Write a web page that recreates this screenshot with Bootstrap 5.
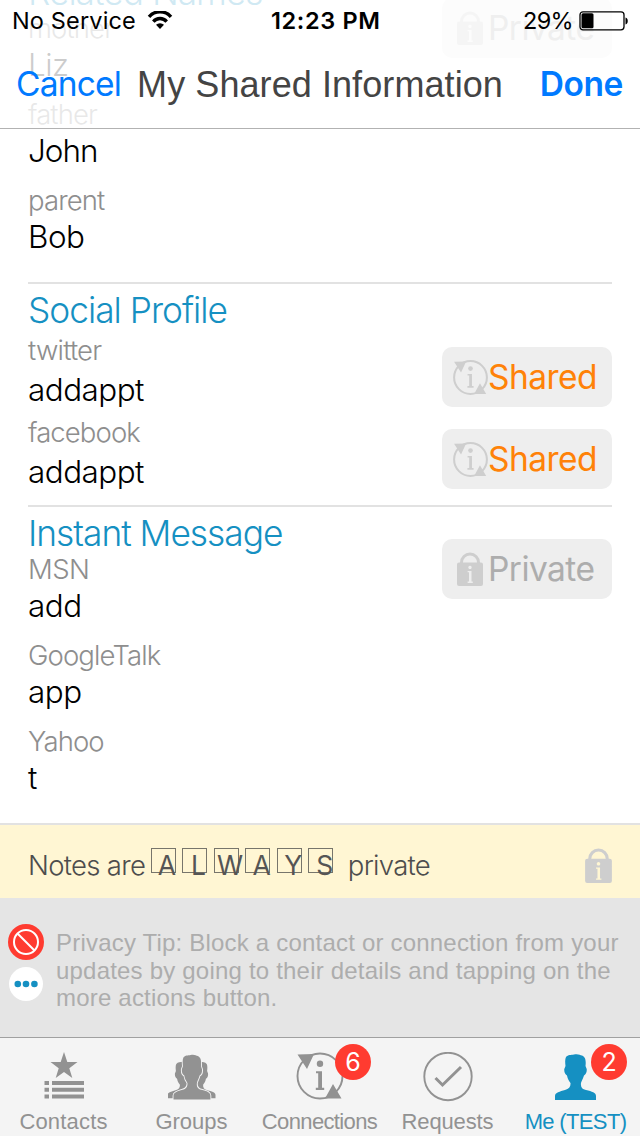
<!DOCTYPE html>
<html lang="en">
<head>
<meta charset="utf-8">
<meta name="viewport" content="width=device-width, initial-scale=1">
<title>My Shared Information</title>
<link href="https://cdn.jsdelivr.net/npm/bootstrap@5.3.0/dist/css/bootstrap.min.css" rel="stylesheet">
<style>
:root{--brand:#1590c2;--ios:#007aff;--muted:#8e8e8e;--rule:#e2e2e2}
body{font-family:Inter,"Liberation Sans",sans-serif;color:#000;background:#fff}
.screen{height:1136px;white-space:nowrap}
.helv{font-family:"Liberation Sans",Arial,sans-serif}

/* translucent header over the scrolled list */
.topbar{height:129px;background:rgba(255,255,255,.8);border-bottom:1px solid #b2b2b2}
.status{height:40px;font-size:23.5px;line-height:41px;padding:0 11px 0 12px}
.status .clock{font-weight:600;letter-spacing:.65px;margin-left:95px}
.battery{width:50px;height:22px}
.titlebar{height:88px;padding:0 17px 0 16px;font-size:33.5px;line-height:88px}
.titlebar a{color:var(--ios);text-decoration:none}
.titlebar h1{font-size:36px;line-height:90px;letter-spacing:.08px;color:#444;font-weight:400}

.list{margin-top:-28px;padding:0 28px;font-weight:300}
.group{border-bottom:2px solid var(--rule)}
.group:last-child{border-bottom:0}
.group h2{font-size:35.3px;line-height:41px;font-weight:300;color:var(--brand);letter-spacing:-1px;margin:0 0 -3px}
.fld dt{font-size:27.5px;line-height:36px;font-weight:300;color:var(--muted);letter-spacing:-.9px}
.fld dd{font-size:31.4px;line-height:38px;letter-spacing:-.5px;margin:0 0 12px}
.fld dl,.fld{margin:0}
.wide dt{margin-bottom:3px}
.wide dd{margin-bottom:-2px}
.pill{width:170px;height:60px;border:0;border-radius:10px;background:#eee;font-size:33.5px;line-height:60px;letter-spacing:-.55px;font-weight:400;padding:0 0 0 11px}
.pill.on{color:#ff8208}
.pill.off{color:#adadad;padding-left:15px}
.pill.top-gap{margin-top:26px}
.ico-gray{color:#cecece}

.notes{height:75px;background:#fff6d3;border-top:2px solid var(--rule);padding:9px 28px 0;font-size:27.5px;font-weight:300;color:#4d4d4d;letter-spacing:-.7px}
.boxed{width:25px;height:25px;border:1.5px solid #77756b;margin-right:6.55px;font-size:26.5px;line-height:32px;font-weight:400;letter-spacing:0;padding-left:8px;color:#555;display:flex;justify-content:center}
.tip{height:139px;background:#e5e5e5;color:#adadad;font-size:24px;line-height:27.6px;letter-spacing:.2px;padding:26px 0 0 8px}

.tabs{height:99px;border-top:1px solid #a0a0a0;background:#f4f4f4;color:#929292;font-size:22px}
.tab-item{width:128px;padding-top:14px}
.tab-item .cap{line-height:26px;margin-top:9px;margin-left:-1px}
.tab-item.current{color:var(--brand)}
.bubble{width:36px;height:36px;border-radius:50%;background:#ff3b30;color:#fff;font:400 25px/36px Inter,sans-serif;top:6px;left:79px}
svg{display:block;flex:none}
</style>
</head>
<body>
<svg width="0" height="0" class="position-absolute" aria-hidden="true">
  <defs>
    <symbol id="lock" viewBox="0 0 26 34">
      <path d="M4.500 12V10.500a8.500 8.500 0 0 1 17 0V12" fill="none" stroke="currentColor" stroke-width="3"/>
      <path fill-rule="evenodd" fill="currentColor" d="M2 10.500H24a2 2 0 0 1 2 2V32a2 2 0 0 1-2 2H2a2 2 0 0 1-2-2V12.500a2 2 0 0 1 2-2ZM13 13.700a1.700 1.700 0 1 0 .01 0ZM10.600 19V20.200H12V29.600H10.600V30.900H15.800V29.600H14.500V19Z"/>
    </symbol>
    <symbol id="share" viewBox="0 0 48 48">
      <circle cx="24" cy="24" r="22.500" fill="none" stroke="currentColor"/>
      <path fill="currentColor" stroke="none" d="M1.500 2.500 18 2 11 17ZM29 46.500H45.500L37 32ZM20 19.200H26V35.800H28.200V38H19.800V35.800H22.200V21.300H20Z"/>
      <circle cx="24" cy="11.800" r="3.200" fill="currentColor" stroke="none"/>
    </symbol>
    <symbol id="person" viewBox="0 0 42 46" overflow="visible">
      <path id="bust" d="M11 3C13 .5 16 1 19 .4C23-.4 25 .8 27 1.500C31 3 31 8 30.500 12L31.700 15C32 18 31 20.500 29 21.500C28 25 26.500 27 26 29C25.500 33 27 35 31 36C37 37.500 41 38.500 41 42V46H0V42C0 38.500 5 37.500 10 36C14 35 15.800 33 15.500 29C14 27 12.500 25 12 21.500C10 20.500 9 18 9.300 15L10.500 12C10 8 10 5 11 3Z"/>
    </symbol>
  </defs>
</svg>

<div class="screen d-flex flex-column overflow-hidden position-relative">

  <header class="topbar position-absolute top-0 start-0 w-100 z-3">
    <div class="status d-flex align-items-start">
      <span style="letter-spacing:.15px">No Service</span>
      <svg class="ms-2" style="margin-top:11px" width="32" height="18" viewBox="0 0 32 18"><g fill="none" stroke="#000" stroke-width="3.300"><path d="M5 5.800a14.500 14.500 0 0 1 22 0"/><path d="M9.300 10.600a8.800 8.800 0 0 1 13.400 0"/></g><path d="M16 18l-4-4.200a5.800 5.800 0 0 1 8 0Z"/></svg>
      <span class="clock">12:23 PM</span>
      <span class="ms-auto" style="letter-spacing:-.7px">29%</span>
      <svg class="battery" style="margin:10px 0 0 6px" viewBox="0 0 50 22"><rect x="1" y="1.800" width="44" height="18" rx="3" fill="none" stroke="#000" stroke-width="1.300"/><rect x="2.500" y="3.300" width="12" height="15" rx="1.500"/><path d="M46.500 7.500c3 .5 3 6.500 0 7Z"/></svg>
    </div>
    <nav class="titlebar d-flex">
      <a href="#" style="letter-spacing:-.8px">Cancel</a>
      <h1 class="helv m-0 ms-3">My Shared Information</h1>
      <a href="#" class="ms-auto fw-semibold" style="letter-spacing:-.4px">Done</a>
    </nav>
  </header>

  <main class="list flex-grow-1 overflow-hidden">
    <section class="group d-flex justify-content-between" style="height:312px">
      <div>
        <h2>Related Names</h2>
        <dl class="fld"><dt>mother</dt><dd>Liz</dd><dt>father</dt><dd style="letter-spacing:-1px">John</dd><dt>parent</dt><dd>Bob</dd></dl>
      </div>
      <button class="pill off top-gap d-flex align-items-center"><svg class="ico-gray" style="margin-right:5px" width="26" height="34"><use href="#lock"/></svg>Private</button>
    </section>

    <section class="group" style="height:223px;padding-top:6px">
      <h2>Social Profile</h2>
      <div class="d-flex justify-content-between align-items-end wide" style="margin-top:4px">
        <dl class="fld"><dt style="letter-spacing:-.8px">twitter</dt><dd>addappt</dd></dl>
        <button class="pill on d-flex align-items-center"><svg class="ico-gray" width="35" height="35" stroke-width="2.800"><use href="#share"/></svg>Shared</button>
      </div>
      <div class="d-flex justify-content-between align-items-end wide" style="margin-top:7px">
        <dl class="fld"><dt>facebook</dt><dd>addappt</dd></dl>
        <button class="pill on d-flex align-items-center"><svg class="ico-gray" width="35" height="35" stroke-width="2.800"><use href="#share"/></svg>Shared</button>
      </div>
    </section>

    <section class="group d-flex justify-content-between" style="padding-top:6px">
      <div>
        <h2>Instant Message</h2>
        <dl class="fld"><dt style="letter-spacing:-.6px">MSN</dt><dd>add</dd><dt>GoogleTalk</dt><dd>app</dd><dt>Yahoo</dt><dd>t</dd></dl>
      </div>
      <button class="pill off top-gap d-flex align-items-center"><svg class="ico-gray" style="margin-right:5px" width="26" height="34"><use href="#lock"/></svg>Private</button>
    </section>
  </main>

  <section class="notes d-flex align-items-start flex-shrink-0">
    <span style="line-height:63px;width:122.500px">Notes are</span>
    <span class="d-flex" style="margin-top:14px"><span class="boxed">A</span><span class="boxed">L</span><span class="boxed">W</span><span class="boxed">A</span><span class="boxed">Y</span><span class="boxed">S</span></span>
    <span style="line-height:63px;margin-left:8px">private</span>
    <svg class="ico-gray ms-auto" style="margin-top:14px" width="27" height="35"><use href="#lock"/></svg>
  </section>

  <section class="tip helv d-flex flex-shrink-0">
    <div class="d-flex flex-column align-items-center me-2 pe-1">
      <svg width="36" height="36" viewBox="0 0 36 36"><circle cx="18" cy="18" r="18" fill="#ff3b30"/><g fill="none" stroke="#fff" stroke-width="2"><circle cx="18" cy="18" r="12"/><path d="M9.500 9.500l17 17"/></g></svg>
      <svg style="margin-top:7px" width="34" height="34" viewBox="0 0 34 34"><circle cx="17" cy="17" r="17" fill="#fff"/><g fill="#1590c2"><circle cx="8.800" cy="17" r="3.300"/><circle cx="17" cy="17" r="3.300"/><circle cx="25.400" cy="17" r="3.300"/></g></svg>
    </div>
    <p class="m-0" style="padding-top:5px">Privacy Tip: Block a contact or connection from your<br>updates by going to their details and tapping on the<br>more actions button.</p>
  </section>

  <nav class="tabs helv d-flex flex-shrink-0">
    <div class="tab-item d-flex flex-column align-items-center">
      <svg width="48" height="48" viewBox="0 0 48 48" fill="currentColor"><path d="M24 0 27.300 10H37.500L29.300 16.200 32.300 26 24 20 15.700 26 18.700 16.200 10.500 10H20.700ZM4.500 29H9V33H4.500ZM12 29H44V33H12ZM4.500 35.700H9V39.700H4.500ZM12 35.700H44V39.700H12ZM4.500 42.400H9V46.400H4.500ZM12 42.400H44V46.400H12Z"/></svg>
      <span class="cap" style="letter-spacing:.17px">Contacts</span>
    </div>
    <div class="tab-item d-flex flex-column align-items-center">
      <svg width="48" height="48" viewBox="0 0 48 48" fill="currentColor"><use href="#bust" transform="translate(-.5 9.500) scale(.8 .8)"/><use href="#bust" transform="translate(47.500 9.500) scale(-.8 .8)"/><use href="#bust" transform="translate(5.500 2.500) scale(.9 .98)" stroke="#f4f4f4" stroke-width="2" paint-order="stroke"/></svg>
      <span class="cap">Groups</span>
    </div>
    <div class="tab-item d-flex flex-column align-items-center position-relative">
      <svg width="48" height="48" stroke-width="1.900"><use href="#share"/></svg>
      <span class="cap" style="letter-spacing:-.63px">Connections</span>
      <span class="bubble position-absolute text-center">6</span>
    </div>
    <div class="tab-item d-flex flex-column align-items-center">
      <svg width="50" height="50" viewBox="0 0 50 50" fill="none" stroke="currentColor" style="margin-bottom:-2px"><circle cx="25" cy="24.500" r="23.700" stroke-width="1.900"/><path d="M12.500 26 19.500 33 38 15" stroke-width="3"/></svg>
      <span class="cap" style="letter-spacing:-.13px">Requests</span>
    </div>
    <div class="tab-item current d-flex flex-column align-items-center position-relative">
      <svg width="42" height="46" style="margin:1.500px 0 .5px" fill="currentColor"><use href="#person"/></svg>
      <span class="cap" style="letter-spacing:-.65px">Me (TEST)</span>
      <span class="bubble position-absolute text-center">2</span>
    </div>
  </nav>
</div>
<script src="https://cdn.jsdelivr.net/npm/bootstrap@5.3.0/dist/js/bootstrap.bundle.min.js"></script>
</body>
</html>
